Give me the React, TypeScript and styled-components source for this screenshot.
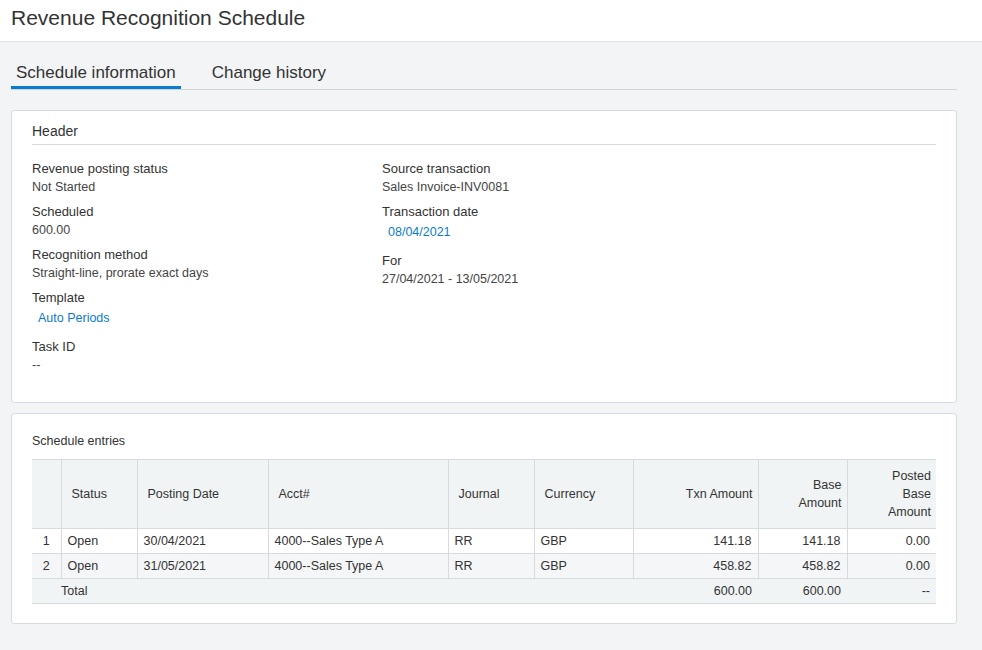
import React from "react";
import styled, { createGlobalStyle } from "styled-components";

const Global = createGlobalStyle`
  html, body { margin: 0; padding: 0; background: #f2f4f5; }
  body { font-family: "Liberation Sans", Arial, sans-serif; color: #333; }
`;

const TitleBar = styled.div`
  height: 42px;
  background: #fff;
  border-bottom: 1px solid #dfe3e6;
  box-sizing: border-box;
  padding: 6px 11px 0;
  font-size: 21px;
  color: #333;
`;

const Body = styled.div`
  padding: 18px 25px 20px 11px;
  display: flex;
  flex-direction: column;
  gap: 10px;
`;

const Tabs = styled.div`
  display: flex;
  gap: 26px;
  border-bottom: 1px solid #cfd6da;
  height: 29px;
  margin-bottom: 10px;
`;

const Tab = styled.div<{ $active?: boolean }>`
  font-size: 17px;
  padding: 3px 5px 0;
  color: #333;
  box-sizing: border-box;
  border-bottom: 3px solid ${(p) => (p.$active ? "#0a7bd1" : "transparent")};
`;

const Card = styled.div<{ $h: number }>`
  background: #fff;
  border: 1px solid #d5dbdf;
  border-radius: 3px;
  height: ${(p) => p.$h}px;
  box-sizing: border-box;
  padding: 12px 20px 0;
`;

const SectionTitle = styled.div`
  font-size: 14px;
  padding-bottom: 5px;
  border-bottom: 1px solid #d5dbdf;
  margin-bottom: 16px;
`;

const Fields = styled.div`
  display: grid;
  grid-template-columns: 350px 1fr;
`;

const Col = styled.div`
  display: flex;
  flex-direction: column;
`;

const Field = styled.div<{ $gap?: number }>`
  margin-bottom: ${(p) => p.$gap ?? 10}px;
`;

const Label = styled.div`
  font-size: 13px;
  color: #333;
  margin-bottom: 4px;
`;

const Value = styled.div<{ $link?: boolean }>`
  font-size: 12.5px;
  color: ${(p) => (p.$link ? "#0a7bd1" : "#444")};
  padding-left: ${(p) => (p.$link ? "6px" : "0")};
  margin-top: ${(p) => (p.$link ? "6px" : "0")};
`;

const SmallTitle = styled.div`
  font-size: 12.5px;
  margin: 8px 0 11px;
`;

const Table = styled.table`
  border-collapse: collapse;
  width: 904px;
  font-size: 12.5px;
  color: #333;
  table-layout: fixed;
`;

const Th = styled.th<{ $right?: boolean }>`
  background: #f1f4f5;
  font-weight: normal;
  height: 68px;
  border: 1px solid #d5dbdf;
  border-top: 1px solid #d5dbdf;
  text-align: ${(p) => (p.$right ? "right" : "left")};
  padding: 0 5px 0 10px;
  line-height: 18px;
  &:first-child { border-left: none; }
  &:last-child { border-right: none; }
`;

const Tr = styled.tr<{ $shade?: boolean }>`
  background: ${(p) => (p.$shade ? "#f4f6f7" : "#fff")};
`;

const Td = styled.td<{ $right?: boolean; $center?: boolean }>`
  height: 24px;
  border: 1px solid #d5dbdf;
  padding: 0 6px;
  text-align: ${(p) => (p.$right ? "right" : p.$center ? "center" : "left")};
  &:first-child { border-left: none; }
  &:last-child { border-right: none; }
`;

const TotalTd = styled.td<{ $right?: boolean }>`
  height: 24px;
  background: #f1f4f5;
  border-bottom: 1px solid #d5dbdf;
  padding: 0 6px;
  text-align: ${(p) => (p.$right ? "right" : "left")};
`;

const widths = [29, 76, 131, 180, 86, 99, 125, 89, 89];
const rows = [
  ["1", "Open", "30/04/2021", "4000--Sales Type A", "RR", "GBP", "141.18", "141.18", "0.00"],
  ["2", "Open", "31/05/2021", "4000--Sales Type A", "RR", "GBP", "458.82", "458.82", "0.00"],
];

export default function App() {
  return (
    <>
      <Global />
      <TitleBar>Revenue Recognition Schedule</TitleBar>
      <Body>
        <Tabs>
          <Tab $active>Schedule information</Tab>
          <Tab>Change history</Tab>
        </Tabs>
        <Card $h={293}>
          <SectionTitle>Header</SectionTitle>
          <Fields>
            <Col>
              <Field><Label>Revenue posting status</Label><Value>Not Started</Value></Field>
              <Field><Label>Scheduled</Label><Value>600.00</Value></Field>
              <Field><Label>Recognition method</Label><Value>Straight-line, prorate exact days</Value></Field>
              <Field $gap={14}><Label>Template</Label><Value $link>Auto Periods</Value></Field>
              <Field><Label>Task ID</Label><Value>--</Value></Field>
            </Col>
            <Col>
              <Field><Label>Source transaction</Label><Value>Sales Invoice-INV0081</Value></Field>
              <Field $gap={14}><Label>Transaction date</Label><Value $link>08/04/2021</Value></Field>
              <Field><Label>For</Label><Value>27/04/2021 - 13/05/2021</Value></Field>
            </Col>
          </Fields>
        </Card>
        <Card $h={211}>
          <SmallTitle>Schedule entries</SmallTitle>
          <Table>
            <colgroup>
              {widths.map((w, i) => <col key={i} style={{ width: w }} />)}
            </colgroup>
            <thead>
              <tr>
                <Th />
                <Th>Status</Th>
                <Th>Posting Date</Th>
                <Th>Acct#</Th>
                <Th>Journal</Th>
                <Th>Currency</Th>
                <Th $right>Txn Amount</Th>
                <Th $right>Base<br />Amount</Th>
                <Th $right>Posted<br />Base<br />Amount</Th>
              </tr>
            </thead>
            <tbody>
              {rows.map((r, i) => (
                <Tr key={i} $shade={i === 1}>
                  {r.map((c, j) => (
                    <Td key={j} $center={j === 0} $right={j >= 6}>{c}</Td>
                  ))}
                </Tr>
              ))}
              <tr>
                <TotalTd />
                <TotalTd colSpan={5} style={{ paddingLeft: 0 }}>Total</TotalTd>
                <TotalTd $right>600.00</TotalTd>
                <TotalTd $right>600.00</TotalTd>
                <TotalTd $right>--</TotalTd>
              </tr>
            </tbody>
          </Table>
        </Card>
      </Body>
    </>
  );
}
